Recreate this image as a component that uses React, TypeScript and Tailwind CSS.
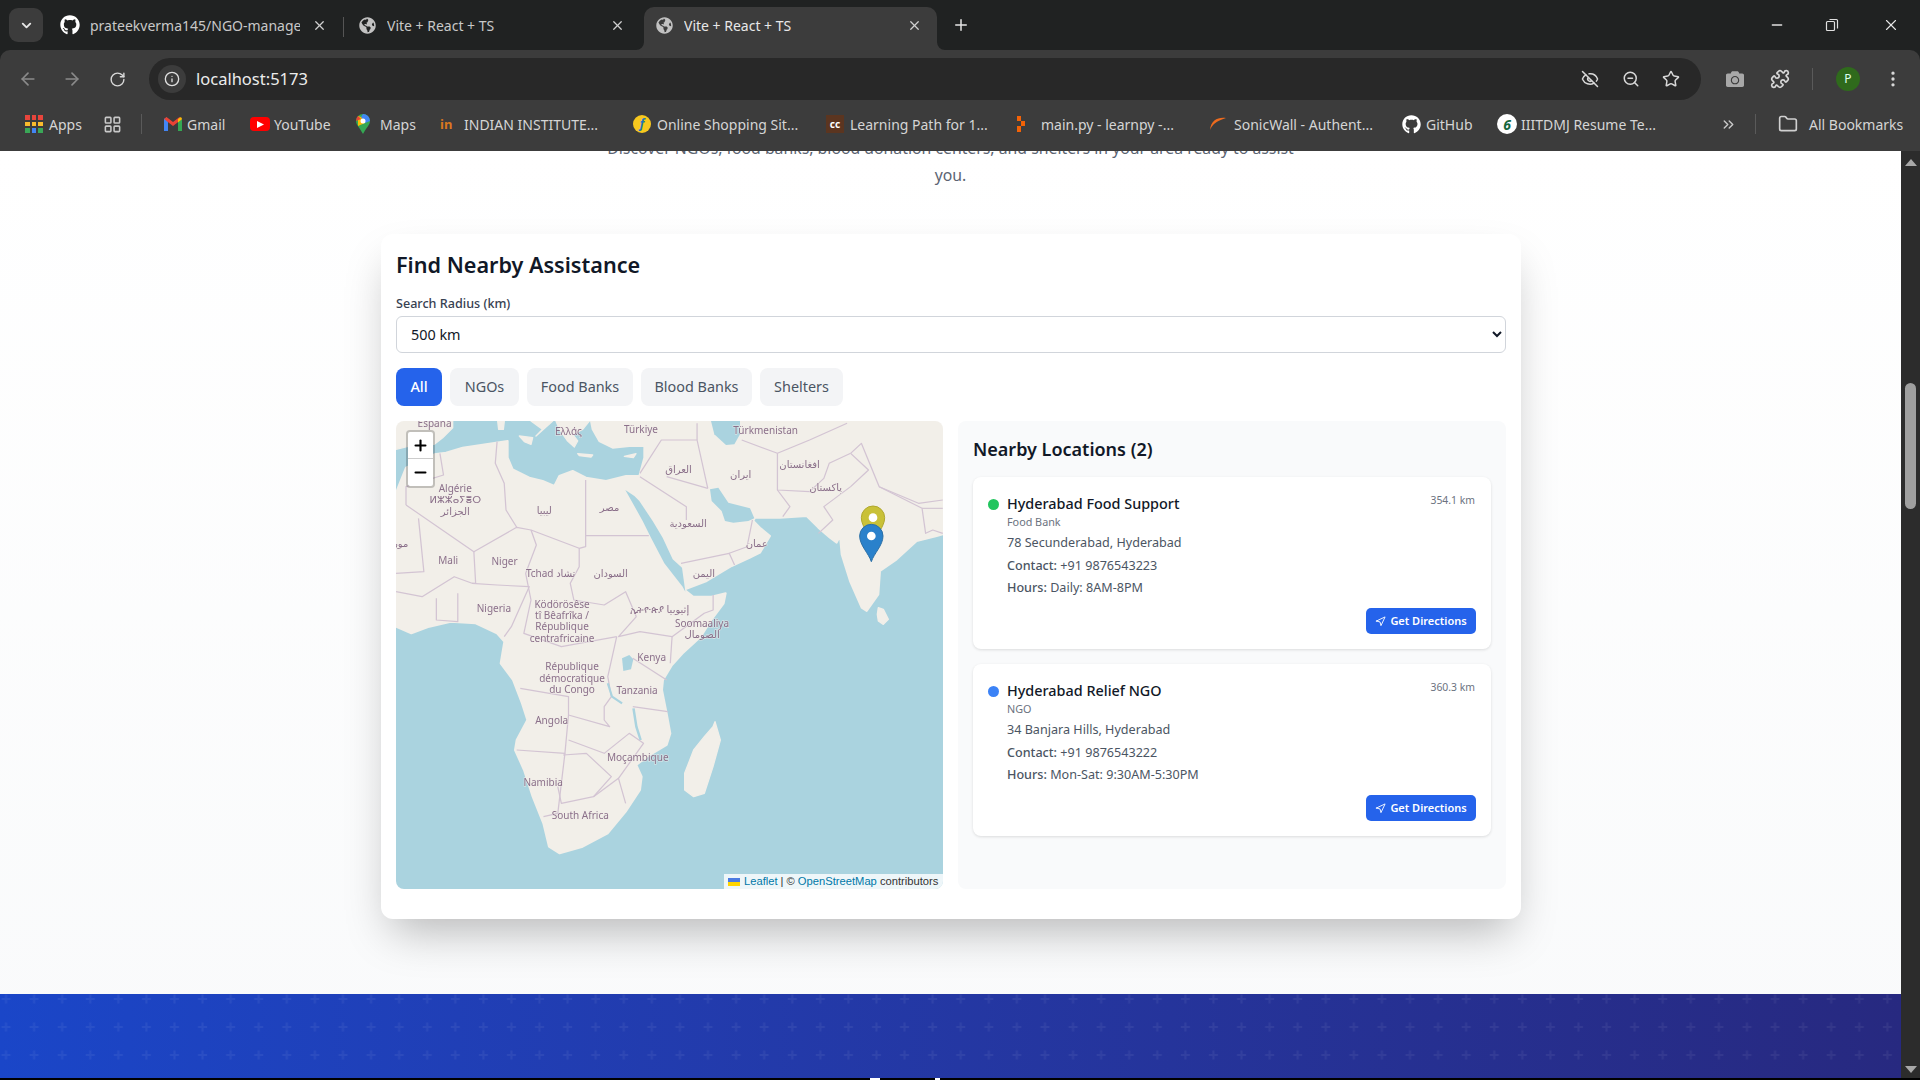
import { ArrowLeft, ArrowRight, ChevronDown, ChevronsRight, EllipsisVertical, EyeOff, Folder, Info, LayoutGrid, Minus, Navigation, Plus, Puzzle, RotateCw, Star, X, ZoomOut } from 'lucide-react'
import { FaCamera, FaGithub, FaGlobeAmericas } from 'react-icons/fa'

const LAND = '0,215 30,140 115,100 150,95 200,80 300,65 335,60 335,110 350,145 400,170 440,180 475,195 490,165 530,150 570,170 630,180 690,165 730,165 745,110 745,75 700,75 650,80 610,60 590,25 585,0 1641,0 1641,340 1622,345 1562,360 1502,415 1452,450 1447,520 1412,570 1397,560 1362,480 1337,400 1332,345 1322,365 1302,350 1267,320 1232,285 1152,290 1077,290 1072,300 1092,320 1122,345 1092,395 1062,410 1007,435 932,480 867,505 870,510 892,527 946,527 989,517 983,547 946,597 914,647 860,697 828,732 801,777 798,807 812,877 823,937 812,972 753,1007 721,1032 737,1067 732,1107 689,1172 635,1237 560,1277 491,1297 459,1277 442,1207 410,1127 384,1047 357,987 362,957 394,897 378,847 351,777 314,727 319,697 325,662 303,637 239,607 164,602 100,617 46,637 0,617'

const ISLANDS = [
  '0,0 170,0 170,20 140,50 115,70 60,70 0,85',
  '957,902 973,957 951,1037 925,1117 893,1127 866,1107 866,1057 893,987 925,947 951,917',
  '1447,560 1462,565 1477,595 1462,610 1447,600 1444,580',
  '480,0 490,25 515,60 535,78 545,60 530,40 560,25 580,0',
  '405,0 440,25 420,45 470,0',
  '305,0 325,0 322,25 308,25',
  '370,45 410,50 405,70 385,62',
  '545,98 590,102 585,108 550,104',
  '685,106 720,98 712,110',
]

const WATER = [
  '688,207 715,255 740,300 765,350 805,427 860,497 868,512 866,497 858,440 830,415 800,350 770,300 730,240 715,225',
  '942,205 967,200 997,245 1062,262 1075,292 1057,300 1012,305 987,300 977,270 947,240',
  '945,0 955,40 990,72 1015,70 1032,40 1032,0',
  '678,712 700,702 712,715 705,745 682,750',
]

// border lines, read off the crop at 2.8 x 3
const BORDERS = [
  '45,255 235,395 355,322 395,330 530,385 548,380 548,180',
  '80,295 95,455 17,460',
  '235,395 240,490 230,490',
  '300,65 295,130 320,190 325,270 355,322',
  '45,255 45,200 150,165 140,100',
  '395,330 410,375 380,460 395,540 375,640 480,680 635,650',
  '530,385 530,440 505,490 515,540 600,555 660,515 690,590',
  '548,347 725,347',
  '230,490 300,495 390,500 340,620 320,650',
  '17,515 90,530 180,470 230,490',
  '130,535 130,600 190,605 190,520',
  '690,590 640,650 700,635 790,650 880,580 905,570 905,525',
  '790,650 785,730',
  '680,715 775,780',
  '635,650 610,770 620,830 600,860 600,900 615,920 500,885 500,830 365,805',
  '680,860 778,875',
  '355,990 490,1000 500,885',
  '500,960 600,1000 670,940 710,970 640,1075 660,1150',
  '490,1000 470,1180 430,1190',
  '485,1005 550,1000 620,1070 570,1130 480,1150 470,1100',
  '570,1130 640,1075',
  '700,160 760,60 860,60 890,205',
  '775,170 890,205',
  '700,170 830,260 830,300',
  '860,10 860,60',
  '815,430 950,400 965,435',
  '950,400 1000,380 1015,300',
  '1085,100 1085,210 1175,215 1215,175 1230,130 1290,100',
  '1085,210 1120,260 1100,290',
  '985,60 1085,100 1175,60 1280,10',
  '1290,100 1340,150 1290,200 1215,260 1240,300 1200,340',
  '1290,100 1320,70 1370,200 1480,250 1548,240',
  '1370,200 1490,265 1500,340 1520,330 1548,340',
  '1490,265 1548,265',
]

const LABELS: [string, number, number][] = [
  ['España', 125, 12], ['Ελλάς', 500, 35], ['Türkiye', 703, 30], ['Türkmenistan', 1052, 32],
  ['العراق', 808, 148], ['ایران', 982, 165], ['افغانستان', 1147, 133], ['پاکستان', 1220, 203],
  ['Algérie', 183, 207], ['ⵍⵣⵣⴰⵢⴻⵔ', 183, 240], ['الجزائر', 183, 275], ['ليبيا', 432, 272], ['مصر', 615, 263],
  ['مور', 30, 370], ['السعودية', 835, 312], ['عمان', 1027, 372], ['Mali', 163, 423], ['Niger', 321, 424],
  ['Tchad تشاد', 450, 460], ['السودان', 618, 461], ['اليمن', 879, 460], ['Nigeria', 291, 566],
  ['Ködörösêse', 482, 553], ['tî Bêafrîka /', 482, 587], ['République', 482, 621], ['centrafricaine', 482, 655],
  ['ኢትዮጵያ إثيوبيا', 755, 568], ['Soomaaliya', 874, 610], ['الصومال', 874, 645], ['Kenya', 733, 713],
  ['République', 510, 741], ['démocratique', 510, 775], ['du Congo', 510, 809], ['Tanzania', 692, 811],
  ['Angola', 453, 903], ['Moçambique', 694, 1013], ['Namibia', 429, 1088], ['South Africa', 533, 1187],
]

const Pin = ({ x, y, fill, edge }: { x: number; y: number; fill: string; edge: string }) => (
  <g>
    <path d={`M${x} ${y + 77} C${x - 8} ${y + 52} ${x - 35} ${y + 28} ${x - 35} ${y} A35 35 0 0 1 ${x + 35} ${y} C${x + 35} ${y + 28} ${x + 8} ${y + 52} ${x} ${y + 77}Z`} fill={fill} stroke={edge} strokeWidth="3" />
    <circle cx={x} cy={y} r="13" fill="#fff" />
  </g>
)

const MapArt = () => (
  <svg viewBox="0 0 1641 1404" className="block h-full w-full blur-[0.4px]">
    <rect width="1641" height="1404" fill="#aad3df" />
    <polygon points={LAND} fill="#f2efe9" stroke="#f2efe9" strokeWidth="6" strokeLinejoin="round" />
    {ISLANDS.map((p, i) => <polygon key={i} points={p} fill="#f2efe9" stroke="#f2efe9" strokeWidth="4" strokeLinejoin="round" />)}
    {WATER.map((p, i) => <polygon key={i} points={p} fill="#aad3df" />)}
    <g transform="translate(-18.2 -3) scale(1.0714 1)" fill="none" stroke="#d3c4d3" strokeWidth="3.5" strokeLinejoin="round">
      {BORDERS.map((p, i) => <polyline key={i} points={p} />)}
      <polyline points="610,790 622,830 650,850" stroke="#aad3df" strokeWidth="6" />
      <polyline points="682,865 690,920 702,960" stroke="#aad3df" strokeWidth="7" />
    </g>
    <g fontFamily="'Noto Sans','DejaVu Sans',sans-serif" fontSize="30" textAnchor="middle" fill="#7f627f" fillOpacity="0.9" stroke="#f2efe9" strokeOpacity="0.6" strokeWidth="4" paintOrder="stroke">
      {LABELS.map(([t, x, y], i) => (
        <text key={i} x={(x - 17) * 1.0714} y={y + 7}>{t}</text>
      ))}
    </g>
    <Pin x={1431} y={290} fill="#c9c138" edge="#b0a82e" />
    <Pin x={1426} y={345} fill="#2a81cb" edge="#2a6fa6" />
  </svg>
)

const Apps = () => (
  <span className="grid h-[18px] w-[18px] grid-cols-3 gap-[2px]">
    {['#e8453c', '#e8453c', '#e8453c', '#f9bb2d', '#f9bb2d', '#f9bb2d', '#3aa757', '#4285f4', '#3aa757'].map((c, i) => (
      <i key={i} className="block" style={{ background: c }} />
    ))}
  </span>
)

const Gmail = () => (
  <svg viewBox="0 0 20 16" className="h-[16px] w-[20px]">
    <path d="M1 15V3l2.500-1.500L5 3v12z" fill="#4285f4" />
    <path d="M15 15V3l1.500-1.500L19 3v12z" fill="#34a853" />
    <path d="M1 3l9 7 9-7-2.500-2L10 6 3.500 1z" fill="#ea4335" />
    <path d="M15 3l3-2 1 2-4 3.500z" fill="#fbbc04" />
  </svg>
)

const YouTube = () => (
  <span className="flex h-[14px] w-[20px] items-center justify-center rounded-[4px] bg-[#f00]">
    <svg viewBox="0 0 6 6" className="h-[7px] w-[7px]"><path d="M0 0l6 3-6 3z" fill="#fff" /></svg>
  </span>
)

const MapsPin = () => (
  <svg viewBox="0 0 14 20" className="h-[20px] w-[14px]">
    <path d="M7 0a7 7 0 0 1 7 7c0 4-4 7-7 13C4 14 0 11 0 7a7 7 0 0 1 7-7z" fill="#34a853" />
    <path d="M7 0a7 7 0 0 1 7 7L9 9 5 3z" fill="#4285f4" />
    <path d="M2 2l3 1 4 6-7 3z" fill="#fbbc04" />
    <path d="M0 7a7 7 0 0 1 2-5l3 3z" fill="#ea4335" />
    <circle cx="7" cy="7" r="2.500" fill="#fff" />
  </svg>
)

const Bookmark = ({ icon, label, w }: { icon: React.ReactNode; label: string; w: string }) => (
  <div className={`flex shrink-0 items-center ${w}`}>
    <span className="flex w-[24px] shrink-0 items-center justify-start">{icon}</span>
    <span className="whitespace-nowrap text-[14px] text-[#d5d5d5]">{label}</span>
  </div>
)

const TabTitle = ({ icon, title, w, active }: { icon: React.ReactNode; title: string; w: string; active?: boolean }) => (
  <div className={`relative flex h-[43px] shrink-0 items-center pb-[7px] ${w} ${active ? 'rounded-t-[10px] bg-[#3c3c3c]' : ''}`}>
    {active && (
      <>
        <svg viewBox="0 0 8 8" className="absolute -left-[8px] bottom-0 h-[8px] w-[8px]"><path d="M8 0v8H0a8 8 0 0 0 8-8z" fill="#3c3c3c" /></svg>
        <svg viewBox="0 0 8 8" className="absolute -right-[8px] bottom-0 h-[8px] w-[8px]"><path d="M0 0v8h8a8 8 0 0 1-8-8z" fill="#3c3c3c" /></svg>
      </>
    )}
    <span className="flex w-[20px] shrink-0 justify-center">{icon}</span>
    <span className={`ml-[10px] min-w-0 flex-1 overflow-hidden whitespace-nowrap text-[14px] ${active ? 'text-[#e8e8e8]' : 'text-[#c8c8c8]'}`}>{title}</span>
    <X size={15} className="ml-[12px] shrink-0 text-[#d0d0d0]" />
  </div>
)

const Filter = ({ label, active, w }: { label: string; active?: boolean; w: string }) => (
  <button className={`h-[38px] shrink-0 rounded-lg text-[14.4px] ${w} ${active ? 'bg-[#2563eb] font-medium text-white' : 'bg-[#f3f4f6] text-[#4b5563]'}`}>{label}</button>
)

const LocationCard = ({ color, name, type, distance, address, contact, hours }: { color: string; name: string; type: string; distance: string; address: string; contact: string; hours: string }) => (
  <div className="rounded-lg bg-white px-[15px] pb-[15px] pt-[16px] shadow-[0_1px_3px_rgba(0,0,0,0.12)]">
    <div className="flex items-start justify-between pr-[1px]">
      <div className="flex h-[22px] items-center">
        <span className={`h-[11px] w-[11px] rounded-full ${color}`} />
        <h4 className="ml-[8px] text-[14.4px] font-medium leading-[22px] text-[#111827]">{name}</h4>
      </div>
      <span className="text-[10.4px] leading-[14px] text-[#6b7280]">{distance}</span>
    </div>
    <div className="ml-[19px]">
      <p className="text-[10.8px] leading-[14px] text-[#6b7280]">{type}</p>
      <p className="mt-[6px] text-[12.6px] leading-[16px] text-[#4b5563]">{address}</p>
      <p className="mt-[6px] text-[12.6px] leading-[17px] text-[#4b5563]"><span className="font-medium">Contact:</span> {contact}</p>
      <p className="mt-[5px] text-[12.6px] leading-[18px] text-[#4b5563]"><span className="font-medium">Hours:</span> {hours}</p>
    </div>
    <div className="mt-[11px] flex justify-end">
      <button className="flex h-[26px] w-[110px] items-center justify-center gap-[4px] rounded-[5px] bg-[#2563eb] text-[11px] font-semibold text-white">
        <Navigation size={11} />
        Get Directions
      </button>
    </div>
  </div>
)

export default function App() {
  return (
    <div className="flex h-screen w-full flex-col overflow-hidden bg-[#202222] font-['Noto_Sans','Open_Sans',sans-serif]">
      {/* tab strip */}
      <div className="flex h-[50px] shrink-0 items-end">
        <div className="mb-[8px] ml-[9px] mr-[17px] flex h-[34px] w-[34px] shrink-0 items-center justify-center rounded-[9px] bg-[#3c3c3c]">
          <ChevronDown size={15} strokeWidth={3} className="text-[#e6e6e6]" />
        </div>
        <TabTitle icon={<FaGithub size={20} className="text-white" />} title="prateekverma145/NGO-manage" w="w-[283px] pr-[16px]" />
        <span className="mb-[13px] mr-[13px] h-[20px] w-[1px] shrink-0 bg-[#555]" />
        <TabTitle icon={<FaGlobeAmericas size={17} className="text-[#c2c2c2]" />} title="Vite + React + TS" w="w-[287px] pr-[19px]" />
        <TabTitle icon={<FaGlobeAmericas size={17} className="text-[#c2c2c2]" />} title="Vite + React + TS" w="w-[293px] pl-[10px] pr-[15px]" active />
        <Plus size={18} className="mb-[16px] ml-[15px] text-[#e6e6e6]" />
        <div className="mb-[16px] ml-auto flex items-center">
          <Minus size={16} className="mr-[40px] text-[#e0e0e0]" />
          <svg viewBox="0 0 14 14" className="mr-[43px] h-[14px] w-[14px]" fill="none" stroke="#e0e0e0" strokeWidth="1.2">
            <rect x="1.500" y="3.500" width="8" height="9" rx="1" />
            <path d="M4.500 1.500h7a1 1 0 0 1 1 1v8" />
          </svg>
          <X size={18} strokeWidth={1.5} className="mr-[20px] text-[#e8e8e8]" />
        </div>
      </div>

      {/* toolbar + bookmarks */}
      <div className="h-[101px] shrink-0 rounded-t-[10px] bg-[#3c3c3c]">
        <div className="flex h-[58px] items-center">
          <ArrowLeft size={20} className="ml-[18px] text-[#8a8a8a]" />
          <ArrowRight size={20} className="ml-[24px] text-[#8a8a8a]" />
          <RotateCw size={17} className="ml-[27px] text-[#d8d8d8]" />
          <div className="ml-[23px] flex h-[42px] w-[1552px] items-center rounded-full bg-[#282828] pl-[9px]">
            <span className="flex h-[28px] w-[28px] items-center justify-center rounded-full bg-[#3c3c3c]"><Info size={16} className="text-[#e0e0e0]" /></span>
            <span className="ml-[10px] text-[16.5px] text-[#ececec]">localhost:5173</span>
            <EyeOff size={18} className="ml-auto text-[#d8d8d8]" />
            <ZoomOut size={18} className="ml-[23px] text-[#d8d8d8]" />
            <Star size={18} className="ml-[22px] mr-[21px] text-[#d8d8d8]" />
          </div>
          <FaCamera size={18} className="ml-[25px] text-[#a8a8a8]" />
          <Puzzle size={20} className="ml-[26px] text-[#d8d8d8]" />
          <span className="ml-[22px] h-[22px] w-[1px] bg-[#5a5a5a]" />
          <span className="ml-[23px] flex h-[24px] w-[24px] items-center justify-center rounded-full bg-[#2f6a1c] text-[12px] text-[#dfe]">P</span>
          <EllipsisVertical size={20} className="ml-[23px] text-[#d8d8d8]" />
        </div>
        <div className="flex h-[32px] items-center pl-[25px]">
          <Bookmark icon={<Apps />} label="Apps" w="w-[78px]" />
          <LayoutGrid size={19} className="shrink-0 text-[#c8c8c8]" />
          <span className="ml-[19px] mr-[21px] h-[20px] w-[1px] shrink-0 bg-[#5a5a5a]" />
          <Bookmark icon={<Gmail />} label="Gmail" w="w-[87px]" />
          <Bookmark icon={<YouTube />} label="YouTube" w="w-[106px]" />
          <Bookmark icon={<MapsPin />} label="Maps" w="w-[84px]" />
          <Bookmark icon={<span className="text-[13px] font-bold leading-none text-[#d9781f]">in</span>} label="INDIAN INSTITUTE..." w="w-[193px]" />
          <Bookmark icon={<span className="flex h-[18px] w-[18px] items-center justify-center rounded-full bg-[#f7c81e] text-[12px] font-bold italic text-[#1f74ba]">f</span>} label="Online Shopping Sit..." w="w-[193px]" />
          <Bookmark icon={<span className="flex h-[18px] w-[18px] items-center justify-center bg-[#5b3520] text-[10px] font-bold text-white">cc</span>} label="Learning Path for 1..." w="w-[191px]" />
          <Bookmark icon={<svg viewBox="0 0 8 16" className="h-[16px] w-[8px]" fill="#f26207"><rect width="4" height="5" /><rect x="4" y="5" width="4" height="5" /><rect y="10" width="4" height="6" /></svg>} label="main.py - learnpy -..." w="w-[193px]" />
          <Bookmark icon={<svg viewBox="0 0 16 14" className="h-[14px] w-[16px]"><path d="M16 1C8 0 1 3 0 13c2-5 6-9 16-12z" fill="#ee6b1e" /></svg>} label="SonicWall - Authent..." w="w-[192px]" />
          <Bookmark icon={<FaGithub size={19} className="text-white" />} label="GitHub" w="w-[95px]" />
          <Bookmark icon={<span className="flex h-[20px] w-[20px] items-center justify-center rounded-full bg-white text-[14px] font-bold italic text-[#14683c]">6</span>} label="IIITDMJ Resume Te..." w="w-[223px]" />
          <ChevronsRight size={17} className="shrink-0 text-[#c8c8c8]" />
          <span className="ml-[18px] mr-[22px] h-[20px] w-[1px] shrink-0 bg-[#5a5a5a]" />
          <Folder size={20} className="shrink-0 text-[#d0d0d0]" />
          <span className="ml-[11px] whitespace-nowrap text-[14px] text-[#d5d5d5]">All Bookmarks</span>
        </div>
      </div>

      {/* page */}
      <div className="flex min-h-0 flex-1">
        <main className="flex min-w-0 flex-1 flex-col overflow-hidden bg-gradient-to-b from-white to-[#f9fafb]">
          <p className="mx-auto -mt-[16px] w-[720px] shrink-0 text-center text-[15.8px] leading-[27px] text-[#5b6472]">
            Discover NGOs, food banks, blood donation centers, and shelters in your area ready to assist you.
          </p>
          <section className="ml-[381px] mt-[45px] h-[685px] w-[1140px] shrink-0 rounded-xl bg-white p-[15px] shadow-[0_22px_45px_-10px_rgba(0,0,0,0.27)]">
            <h2 className="text-[21.6px] font-semibold leading-[32px] text-[#111827]">Find Nearby Assistance</h2>
            <label className="mt-[14px] block text-[12.6px] font-medium leading-[17px] text-[#374151]">Search Radius (km)</label>
            <select defaultValue="500" className="mt-[4px] block h-[37px] w-[1110px] rounded-md border border-[#d1d5db] bg-white px-[10px] text-[14.4px] text-[#111827]">
              <option value="500">500 km</option>
            </select>
            <div className="mt-[15px] flex gap-[8px]">
              <Filter label="All" active w="w-[46px]" />
              <Filter label="NGOs" w="w-[69px]" />
              <Filter label="Food Banks" w="w-[106px]" />
              <Filter label="Blood Banks" w="w-[111px]" />
              <Filter label="Shelters" w="w-[83px]" />
            </div>
            <div className="mt-[15px] flex gap-[15px]">
              <div className="relative h-[468px] w-[547px] shrink-0 overflow-hidden rounded-lg">
                <MapArt />
                <div className="absolute left-[10px] top-[9px] w-[29px] overflow-hidden rounded-[4px] border-2 border-black/20 bg-white bg-clip-padding">
                  <div className="flex h-[27px] items-center justify-center border-b border-[#ccc]"><Plus size={17} strokeWidth={3} className="text-black" /></div>
                  <div className="flex h-[27px] items-center justify-center"><Minus size={17} strokeWidth={3} className="text-black" /></div>
                </div>
                <div className="absolute bottom-0 right-0 flex h-[15px] w-[219px] items-center whitespace-nowrap bg-white/80 pl-[4px] font-['Liberation_Sans',sans-serif] text-[11.2px] text-[#333]">
                  <svg viewBox="0 0 12 8" className="mr-[4px] h-[8px] w-[12px]"><rect width="12" height="4" fill="#4c7be1" /><rect y="4" width="12" height="4" fill="#ffd500" /></svg>
                  <span className="text-[#0078a8]">Leaflet</span>
                  <span className="mx-[3px]">|</span>
                  <span>©&nbsp;</span>
                  <span className="text-[#0078a8]">OpenStreetMap</span>
                  <span>&nbsp;contributors</span>
                </div>
              </div>
              <div className="h-[468px] w-[548px] rounded-lg bg-[#f9fafb] px-[15px] pt-[14px]">
                <h3 className="text-[18px] font-semibold leading-[29px] text-[#111827]">Nearby Locations (2)</h3>
                <div className="mt-[13px] flex flex-col gap-[15px]">
                  <LocationCard color="bg-[#22c55e]" name="Hyderabad Food Support" type="Food Bank" distance="354.1 km" address="78 Secunderabad, Hyderabad" contact="+91 9876543223" hours="Daily: 8AM-8PM" />
                  <LocationCard color="bg-[#3b82f6]" name="Hyderabad Relief NGO" type="NGO" distance="360.3 km" address="34 Banjara Hills, Hyderabad" contact="+91 9876543222" hours="Mon-Sat: 9:30AM-5:30PM" />
                </div>
              </div>
            </div>
          </section>
          <footer className="relative mt-[75px] h-[84px] w-full shrink-0 bg-gradient-to-r from-[#1a46c8] to-[#272980]">
            <svg className="absolute inset-0 h-full w-full">
              <defs>
                <pattern id="plus" x="-8" y="-9" width="28.08" height="28" patternUnits="userSpaceOnUse">
                  <path d="M14 9.500v9M9.500 14h9" stroke="#fff" strokeOpacity="0.06" strokeWidth="2" />
                </pattern>
              </defs>
              <rect width="100%" height="100%" fill="url(#plus)" />
            </svg>
          </footer>
        </main>
        <aside className="relative flex w-[19px] shrink-0 flex-col items-center bg-[#2c2c2c]">
          <svg viewBox="0 0 12 7" className="mt-[8px] h-[7px] w-[12px]"><path d="M6 0l6 7H0z" fill="#a8a8a8" /></svg>
          <span className="mt-[217px] h-[126px] w-[11px] rounded-full bg-[#9f9f9f]" />
          <svg viewBox="0 0 12 7" className="mb-[5px] mt-auto h-[7px] w-[12px]"><path d="M6 7l6-7H0z" fill="#a8a8a8" /></svg>
        </aside>
      </div>
      <div className="flex h-[2px] shrink-0 bg-black">
        <span className="ml-[870px] h-[2px] w-[10px] bg-white" />
        <span className="ml-[55px] h-[2px] w-[5px] bg-white" />
      </div>
    </div>
  )
}
